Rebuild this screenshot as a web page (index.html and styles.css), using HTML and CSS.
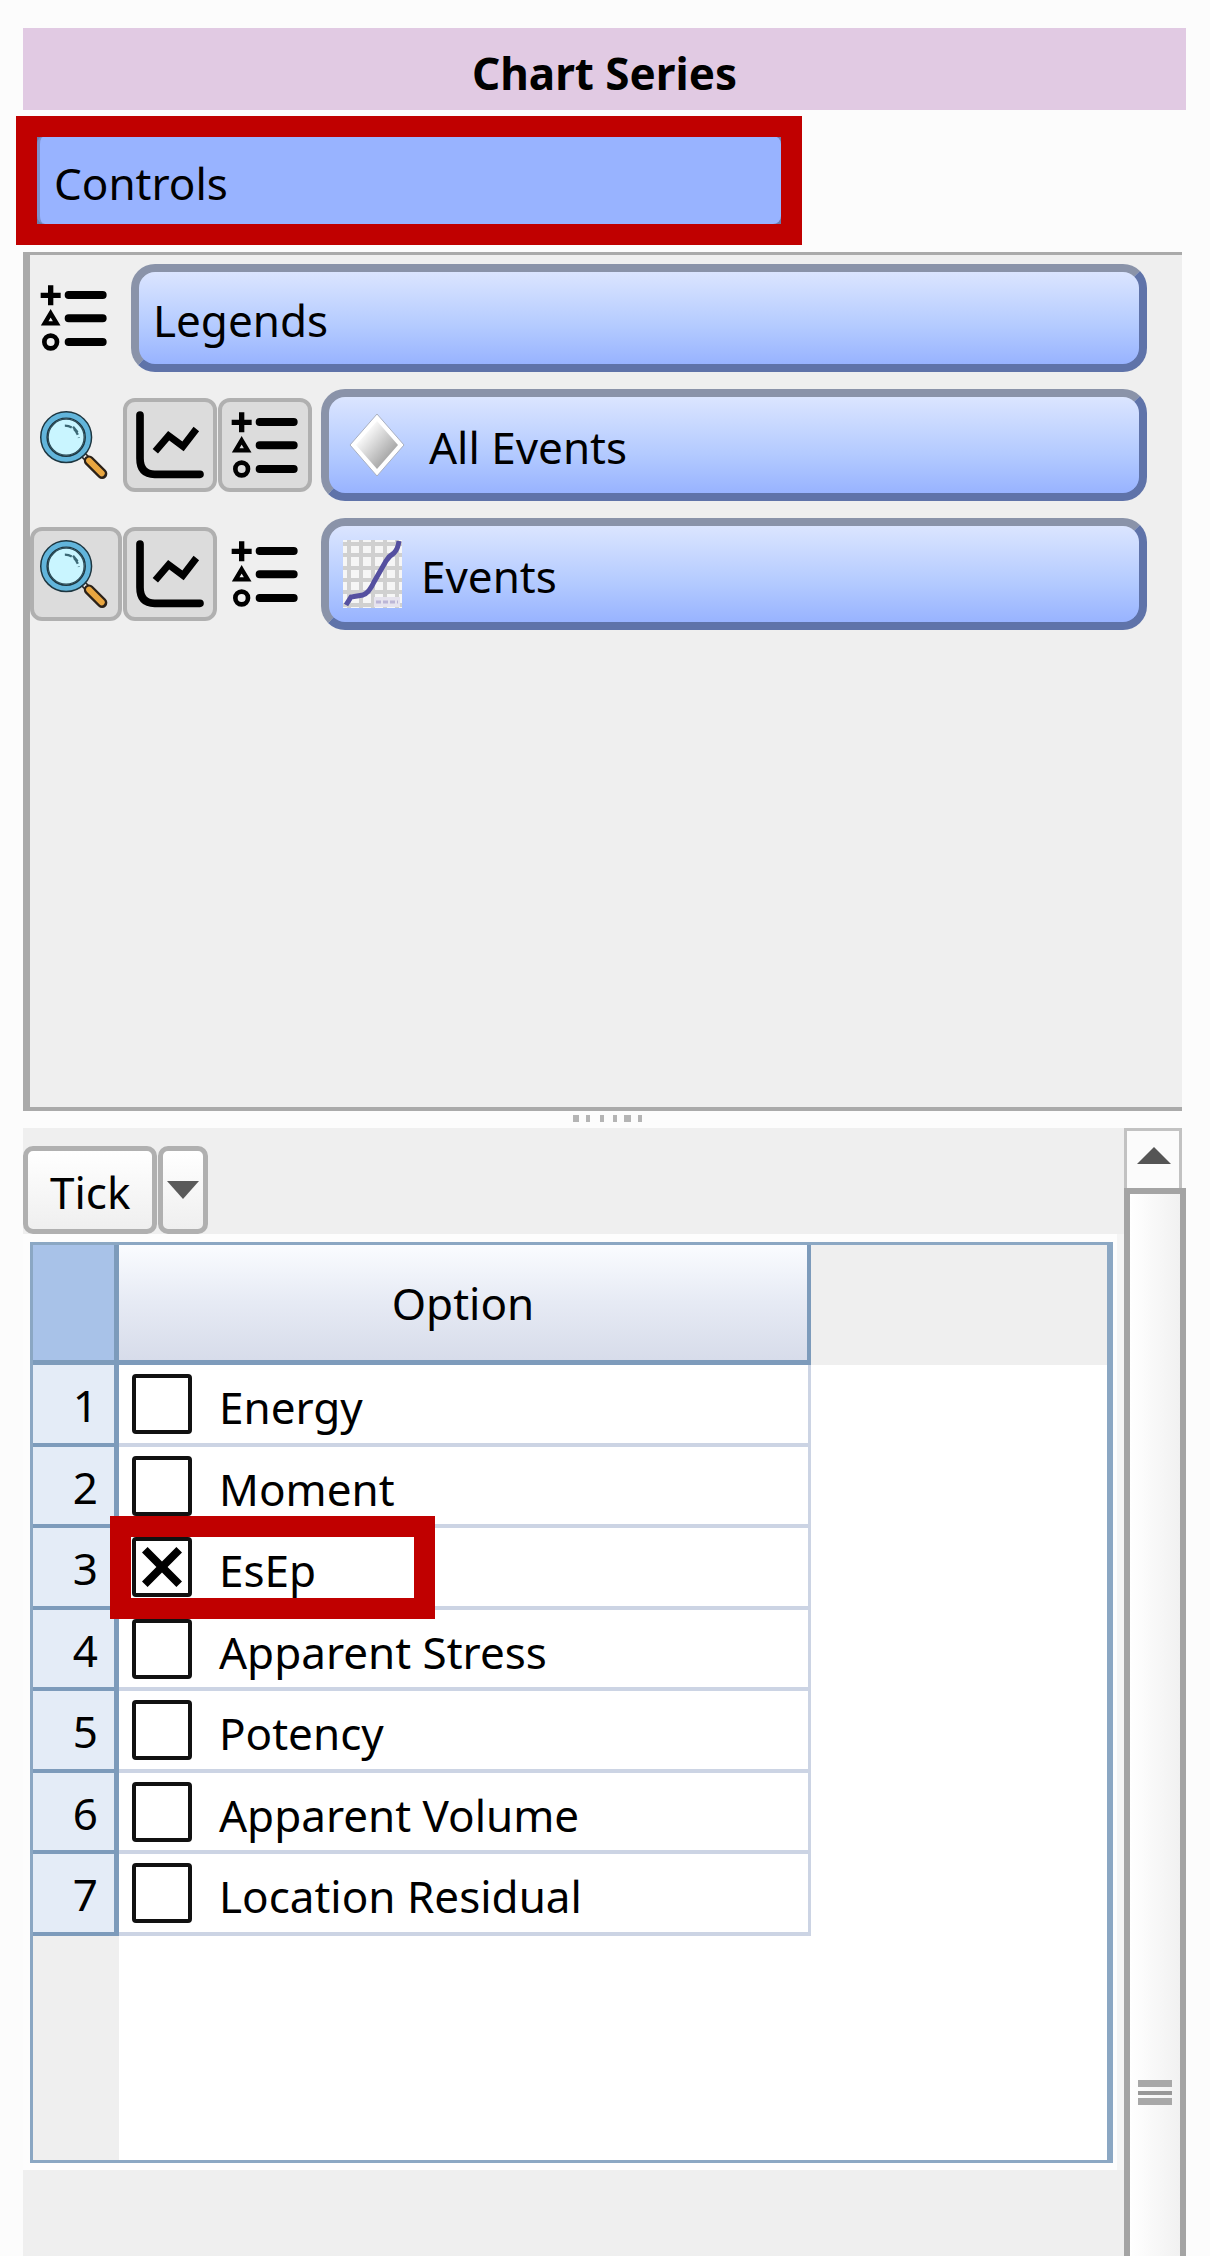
FILE: index.html
```html
<!DOCTYPE html>
<html lang="en">
<head>
<meta charset="utf-8">
<meta name="viewport" content="width=device-width, initial-scale=1">
<title>Chart Series</title>
<link rel="stylesheet" href="styles.css">
</head>
<body>
<svg class="defs" aria-hidden="true">
  <symbol id="legend" viewBox="0 0 204 204">
    <g fill="none" stroke="#000">
      <path stroke-width="16" d="M2 34H62M32 4V64"/>
      <path stroke-width="13" d="M32 88L50 118H14Z"/>
      <circle cx="32" cy="174" r="19" stroke-width="14"/>
      <path stroke-width="24" stroke-linecap="round" d="M86 33H188M86 103H188M86 174H188"/>
    </g>
  </symbol>
  <symbol id="chart" viewBox="0 0 204 204">
    <path fill="none" stroke="#000" stroke-width="23" stroke-linecap="round" stroke-linejoin="round" d="M12 12V142Q12 190 56 190H192"/>
    <path fill="none" stroke="#000" stroke-width="21" d="M58 121L98 74L141 106L181 54"/>
  </symbol>
  <symbol id="search" viewBox="0 0 208 208">
    <path stroke="#2b2b2b" stroke-width="20" d="M132 134L152 154"/>
    <path stroke="#e8e8e8" stroke-width="10" d="M134 136L150 152"/>
    <path stroke="#2b2118" stroke-width="32" stroke-linecap="round" d="M150 152L190 192"/>
    <path stroke="#e9a640" stroke-width="18" stroke-linecap="round" d="M150 152L189 191"/>
    <circle cx="80" cy="80" r="68" fill="#c9f5ff" stroke="#1d3640" stroke-width="24"/>
    <circle cx="80" cy="80" r="68" fill="none" stroke="#62b5db" stroke-width="15"/>
    <circle cx="80" cy="80" r="55" fill="none" stroke="#2c4c58" stroke-width="4"/>
    <path fill="none" stroke="#3b6875" stroke-width="7" stroke-dasharray="22 8" d="M76 45Q108 45 119 82M101 48L119 70"/>
  </symbol>
</svg>

<main class="panel">
  <h1 class="title">Chart Series</h1>
  <div class="controls">
    <button class="controls-button" type="button">Controls</button>
    <span class="highlight highlight-controls"></span>
  </div>

  <section class="series" aria-label="Series">
    <div class="series-row">
      <button class="tool" type="button" aria-label="Legend"><svg><use href="#legend"/></svg></button>
      <button class="pill" type="button">Legends</button>
    </div>
    <div class="series-row series-row-item">
      <button class="tool" type="button" aria-label="Zoom"><svg><use href="#search"/></svg></button>
      <button class="tool tool-on" type="button" aria-label="Line"><svg><use href="#chart"/></svg></button>
      <button class="tool tool-on" type="button" aria-label="Legend"><svg><use href="#legend"/></svg></button>
      <button class="pill pill-icon" type="button">
        <svg class="diamond" viewBox="0 0 60 68">
          <defs><linearGradient id="shade" x1="0" y1="0" x2="1" y2="1"><stop offset=".2" stop-color="#fff"/><stop offset=".75" stop-color="#aaa"/></linearGradient></defs>
          <path fill="#fff" stroke="#a9b0c0" stroke-width="1" d="M30 3L57 34L30 65L3 34Z"/>
          <path fill="url(#shade)" d="M30 10L51 34L30 58L9 34Z"/>
        </svg>
        <span>All Events</span>
      </button>
    </div>
    <div class="series-row series-row-item">
      <button class="tool tool-on" type="button" aria-label="Zoom"><svg><use href="#search"/></svg></button>
      <button class="tool tool-on" type="button" aria-label="Line"><svg><use href="#chart"/></svg></button>
      <button class="tool" type="button" aria-label="Legend"><svg><use href="#legend"/></svg></button>
      <button class="pill pill-icon pill-graph" type="button">
        <svg class="graph" viewBox="0 0 60 68">
          <path fill="#f6f6f6" d="M0 0H59V68H0Z"/>
          <path fill="none" stroke="#d0d0d0" stroke-width="4" d="M6 0V68M18 0V68M30 0V68M42 0V68M54 0V68M0 4H59M0 15H59M0 28H59M0 40H59M0 52H59M0 65H59"/>
          <path fill="#e6e3ee" d="M31 57H57V67H31Z"/>
          <path fill="none" stroke="#bcb6d6" stroke-width="3" stroke-dasharray="5 2" d="M33 62H55"/>
          <path fill="none" stroke="#5550a0" stroke-width="5" d="M3 65L8 57L20 55Q26 53 31 42L43 21Q46 16 51 13Q55 9 56 1"/>
        </svg>
        <span>Events</span>
      </button>
    </div>
  </section>

  <div class="splitter" role="separator">
    <svg viewBox="0 0 69 7" width="69" height="7"><path fill="#b4b4b4" d="M0 0h6v7h-6zM13 0h4v7h-4zM27 0h4v7h-4zM40 0h4v7h-4zM51 0h7v7h-7zM65 0h4v7h-4z"/></svg>
  </div>

  <section class="options" aria-label="Options">
    <div class="options-content">
      <div class="toolbar">
        <button class="tick" type="button">Tick</button>
        <button class="tick tick-menu" type="button" aria-label="Tick menu"><svg viewBox="0 0 32 18" width="32" height="18"><path fill="#5a5a5a" d="M0 0H32L16 18Z"/></svg></button>
      </div>
      <div class="grid-area">
        <div class="grid-frame">
          <table class="grid">
            <thead>
              <tr><td class="corner"></td><th class="column" scope="col">Option</th><td class="spare"></td></tr>
            </thead>
            <tbody>
              <tr><th scope="row">1</th><td class="cell"><label><input type="checkbox"><span>Energy</span></label></td><td></td></tr>
              <tr><th scope="row">2</th><td class="cell"><label><input type="checkbox"><span>Moment</span></label></td><td></td></tr>
              <tr><th scope="row">3</th><td class="cell"><label><input type="checkbox" checked><span>EsEp</span></label><span class="highlight highlight-option"></span></td><td></td></tr>
              <tr><th scope="row">4</th><td class="cell"><label><input type="checkbox"><span>Apparent Stress</span></label></td><td></td></tr>
              <tr><th scope="row">5</th><td class="cell"><label><input type="checkbox"><span>Potency</span></label></td><td></td></tr>
              <tr><th scope="row">6</th><td class="cell"><label><input type="checkbox"><span>Apparent Volume</span></label></td><td></td></tr>
              <tr><th scope="row">7</th><td class="cell"><label><input type="checkbox"><span>Location Residual</span></label></td><td></td></tr>
            </tbody>
          </table>
          <div class="gutter"></div>
        </div>
      </div>
      <div class="options-foot"></div>
    </div>
    <div class="scrollbar">
      <button class="scroll-up" type="button" aria-label="Scroll up"><svg viewBox="0 0 34 17" width="34" height="17"><path fill="#555" d="M17 0L34 17H0Z"/></svg></button>
      <div class="thumb"><span class="grip"></span></div>
    </div>
  </section>
</main>
</body>
</html>
```
FILE: styles.css
```css
* {
  box-sizing: border-box;
}

body {
  margin: 0;
  background: #fcfcfc;
  color: #000;
  font-family: "Noto Sans", "Open Sans", sans-serif;
  font-size: 44px;
  line-height: 60px;
}

button {
  margin: 0;
  padding: 0;
  border: 0;
  background: none;
  color: inherit;
  font: inherit;
}

svg {
  display: block;
}

.defs {
  position: absolute;
  width: 0;
  height: 0;
}

.panel {
  display: flex;
  flex-direction: column;
  min-height: 100vh;
  padding: 28px 24px 0 23px;
}

.title {
  margin: 0;
  padding: 15px 0 7px;
  background: #e1cae3;
  font-size: 44px;
  font-weight: 700;
  text-align: center;
}

.controls {
  position: relative;
  width: 64%;
  margin: 26px 0 28px 14px;
}

.controls-button {
  width: 100%;
  height: 88px;
  padding: 6px 14px 0;
  border-left: 3px solid #7c92cc;
  border-radius: 8px;
  background: #98b3ff;
  box-shadow: 0 0 0 8px #6a7cae;
  text-align: left;
}

.highlight {
  position: absolute;
  border: 21px solid #c00000;
  pointer-events: none;
}

.highlight-controls {
  inset: -20px -21px -21px;
}

/* Series list */

.series {
  display: flex;
  flex: 834 0 0;
  flex-direction: column;
  gap: 17px;
  margin-right: 4px;
  padding: 9px 35px 9px 0;
  border: solid #aaa;
  border-width: 3px 0 4px 7px;
  background: #efefef;
}

.series-row {
  display: grid;
  grid-template-columns: 92px 1fr;
  gap: 9px;
  align-items: center;
}

.series-row-item {
  grid-template-columns: 92px 94px 94px 1fr;
  gap: 1px;
}

.tool {
  display: grid;
  place-items: center;
  height: 94px;
  border: 4px solid transparent;
  border-radius: 12px;
}

.tool:first-child {
  padding-right: 4px;
}

.tool svg {
  width: 68px;
  height: 68px;
}

.tool-on {
  border-color: #b0b0b0;
  background: #dcdcdc;
}

.pill {
  height: 108px;
  padding: 4px 14px 0;
  border: 8px solid;
  border-color: #8a93a9 #5f73a9 #5f73a9 #8a93a9;
  border-radius: 24px;
  background: linear-gradient(#dbe5ff, #b3caff 60%, #98b3ff);
  text-align: left;
}

.pill-icon {
  display: flex;
  align-items: center;
  gap: 22px;
  height: 112px;
  margin-left: 8px;
  padding: 0 18px;
}

.pill-icon span {
  padding-top: 4px;
}

.pill-graph {
  gap: 18px;
  padding: 0 14px;
}

.diamond,
.graph {
  width: 60px;
  height: 68px;
}

.splitter {
  display: flex;
  justify-content: center;
  height: 17px;
  padding: 4px 0 4px 6px;
}

/* Options pane */

.options {
  display: grid;
  flex: 1128 0 0;
  grid-template-columns: 1fr 62px;
}

.options-content {
  display: flex;
  flex-direction: column;
}

.toolbar {
  display: flex;
  gap: 1px;
  padding-top: 18px;
  background: #efefef;
}

.tick {
  height: 88px;
  padding: 4px 22px 0;
  border: 5px solid #b0b0b0;
  border-radius: 10px;
  background: linear-gradient(#fff, #efefef);
}

.tick-menu {
  display: grid;
  place-items: center;
  width: 50px;
  padding: 0;
}

.grid-area {
  display: flex;
  flex: 1;
  padding: 8px 4px 7px 7px;
  border-right: 7px solid #f5f5f5;
  background: #fdfdfd;
}

.grid-frame {
  display: flex;
  flex: 1;
  flex-direction: column;
  border: 3px solid #8ba7c3;
  border-right-width: 6px;
  background: #fff;
}

.grid {
  width: 100%;
  border-collapse: separate;
  border-spacing: 0;
  table-layout: fixed;
}

.grid td,
.grid th {
  padding: 0;
  font-weight: 400;
}

.corner {
  width: 86px;
  height: 120px;
  border: solid #7d9bbb;
  border-width: 0 5px 5px 0;
  background: #a8c2e8;
}

.column {
  width: 692px;
  border: solid #7d9bbb;
  border-width: 0 4px 5px 0;
  background: linear-gradient(#fafcff, #e6eaf4 50%, #d7dcea);
}

.spare {
  background: #efefef;
}

.grid tbody tr {
  height: 82px;
}

.grid tbody tr:nth-child(even) {
  height: 81px;
}

.grid tbody th {
  padding: 2px 16px 0 0;
  border: solid #7d9bbb;
  border-width: 0 5px 4px 0;
  background: #e4ecf7;
  text-align: right;
}

.grid .cell {
  position: relative;
  border: solid #ccd4e4;
  border-width: 0 3px 4px 0;
}

.cell label {
  display: flex;
  align-items: center;
  gap: 27px;
  padding-left: 13px;
}

.cell label span {
  padding-top: 6px;
}

.cell input {
  display: grid;
  flex: none;
  place-items: center;
  width: 60px;
  height: 60px;
  margin: 0;
  border: 4px solid #111;
  border-radius: 4px;
  background: #fff;
  appearance: none;
}

.cell input:checked::before {
  width: 40px;
  height: 40px;
  background: #000;
  clip-path: polygon(0 14%, 14% 0, 50% 36%, 86% 0, 100% 14%, 64% 50%, 100% 86%, 86% 100%, 50% 64%, 14% 100%, 0 86%, 36% 50%);
  content: "";
}

.highlight-option {
  top: -12px;
  left: -9px;
  width: 325px;
  height: 103px;
}

.gutter {
  flex: 1;
  width: 86px;
  background: #efefef;
}

.options-foot {
  height: 86px;
  background: #efefef;
}

.scrollbar {
  display: flex;
  flex-direction: column;
}

.scroll-up {
  display: grid;
  place-items: center;
  width: 58px;
  height: 60px;
  padding: 0 0 8px 2px;
  border: 3px solid #c2c2c2;
  border-bottom: 0;
  background: #fbfbfb;
}

.thumb {
  display: flex;
  flex: 1;
  align-items: flex-end;
  justify-content: center;
  padding-bottom: 151px;
  border: solid #a4a4a4;
  border-width: 6px 6px 0;
  background: linear-gradient(90deg, #fff, #f1f1f1);
}

.grip {
  width: 34px;
  height: 25px;
  background: linear-gradient(#a8a8a8 7px, transparent 7px 11px, #989898 11px 15px, transparent 15px 18px, #a8a8a8 18px);
}
```
